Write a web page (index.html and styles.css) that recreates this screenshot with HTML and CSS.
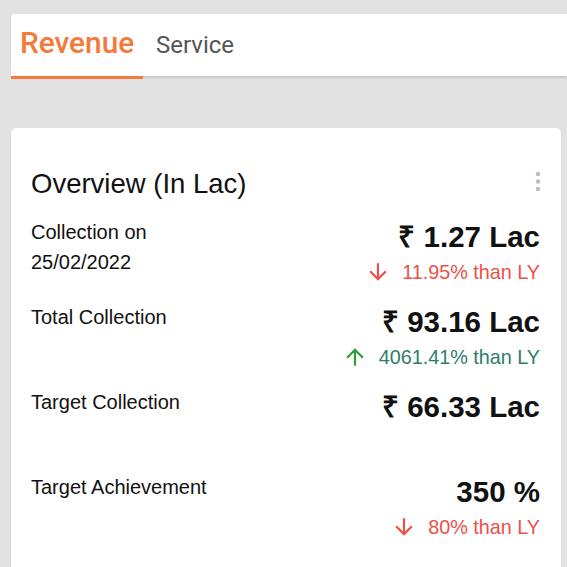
FILE: index.html
```html
<!DOCTYPE html>
<html>
<head>
<meta charset="utf-8">
<link rel="stylesheet" href="styles.css">
</head>
<body>
<div class="page">
  <div class="tabbar">
    <div class="tab active">Revenue</div>
    <div class="tab">Service</div>
  </div>
  <div class="card">
    <div class="card-head">
      <div class="title">Overview (In Lac)</div>
      <svg class="kebab" width="6" height="24" viewBox="0 0 6 24"><circle cx="3" cy="5" r="2.3" fill="#bdbdbd"/><circle cx="3" cy="12.5" r="2.3" fill="#bdbdbd"/><circle cx="3" cy="20" r="2.3" fill="#bdbdbd"/></svg>
    </div>
    <div class="row">
      <div class="label">Collection on<br>25/02/2022</div>
      <div class="vals">
        <div class="value">₹ 1.27 Lac</div>
        <div class="change down"><svg class="arrow" width="26" height="26" viewBox="0 0 24 24"><path d="M20 12l-1.41-1.41L13 16.17V4h-2v12.17l-5.58-5.59L4 12l8 8 8-8z" fill="#eb5147"/></svg><span>11.95% than LY</span></div>
      </div>
    </div>
    <div class="row">
      <div class="label">Total Collection</div>
      <div class="vals">
        <div class="value">₹ 93.16 Lac</div>
        <div class="change up"><svg class="arrow" width="26" height="26" viewBox="0 0 24 24"><path d="M4 12l1.41 1.41L11 7.83V20h2V7.83l5.58 5.59L20 12l-8-8-8 8z" fill="#2f9e3c"/></svg><span>4061.41% than LY</span></div>
      </div>
    </div>
    <div class="row">
      <div class="label">Target Collection</div>
      <div class="vals">
        <div class="value">₹ 66.33 Lac</div>
      </div>
    </div>
    <div class="row">
      <div class="label">Target Achievement</div>
      <div class="vals">
        <div class="value">350 %</div>
        <div class="change down"><svg class="arrow" width="26" height="26" viewBox="0 0 24 24"><path d="M20 12l-1.41-1.41L13 16.17V4h-2v12.17l-5.58-5.59L4 12l8 8 8-8z" fill="#eb5147"/></svg><span>80% than LY</span></div>
      </div>
    </div>
  </div>
</div>
</body>
</html>
```
FILE: styles.css
```css
html, body {
  margin: 0;
  padding: 0;
  background: #e2e2e2;
  overflow: hidden;
}
.page {
  padding: 14px 0 0 11px;
  height: 567px;
  box-sizing: border-box;
  overflow: hidden;
}
.tabbar {
  display: flex;
  align-items: baseline;
  height: 62px;
  background: #fff;
  border-radius: 4px 0 0 0;
  box-shadow: 0 2px 2px rgba(0,0,0,0.12);
}
.tab {
  height: 65px;
  box-sizing: border-box;
  padding-top: 11px;
  line-height: 36px;
  font-family: Roboto, "Liberation Sans", sans-serif;
}
.tab.active {
  width: 132px;
  padding-left: 9px;
  font-size: 29.8px;
  font-weight: 500;
  color: #f57a3a;
  border-bottom: 3px solid #f57a3a;
}
.tab:not(.active) {
  padding-left: 13px;
  font-size: 24px;
  color: #555;
}
.card {
  margin: 52px 6px 0 0;
  background: #fff;
  border-radius: 5px;
  box-shadow: 0 1px 2px rgba(0,0,0,0.1);
  padding: 38px 20px 40px 20px;
  font-family: "Liberation Sans", Arial, sans-serif;
  color: #111;
}
.card-head {
  display: flex;
  justify-content: space-between;
  align-items: flex-start;
  margin-bottom: 15px;
}
.title {
  font-size: 27.5px;
  line-height: 36px;
}
.kebab {
  margin-top: 3px;
}
.row {
  display: flex;
  justify-content: space-between;
  align-items: flex-start;
  height: 85px;
  padding-right: 1px;
}
.label {
  font-size: 20px;
  line-height: 30px;
}
.vals {
  display: flex;
  flex-direction: column;
  align-items: flex-end;
}
.value {
  font-size: 29.5px;
  font-weight: 700;
  line-height: 40px;
}
.change {
  display: flex;
  align-items: center;
  gap: 11px;
  font-size: 19.8px;
  line-height: 30px;
}
.change.down { color: #eb5147; }
.change.up { color: #2e7d6a; }
.arrow { display: block; }
```
